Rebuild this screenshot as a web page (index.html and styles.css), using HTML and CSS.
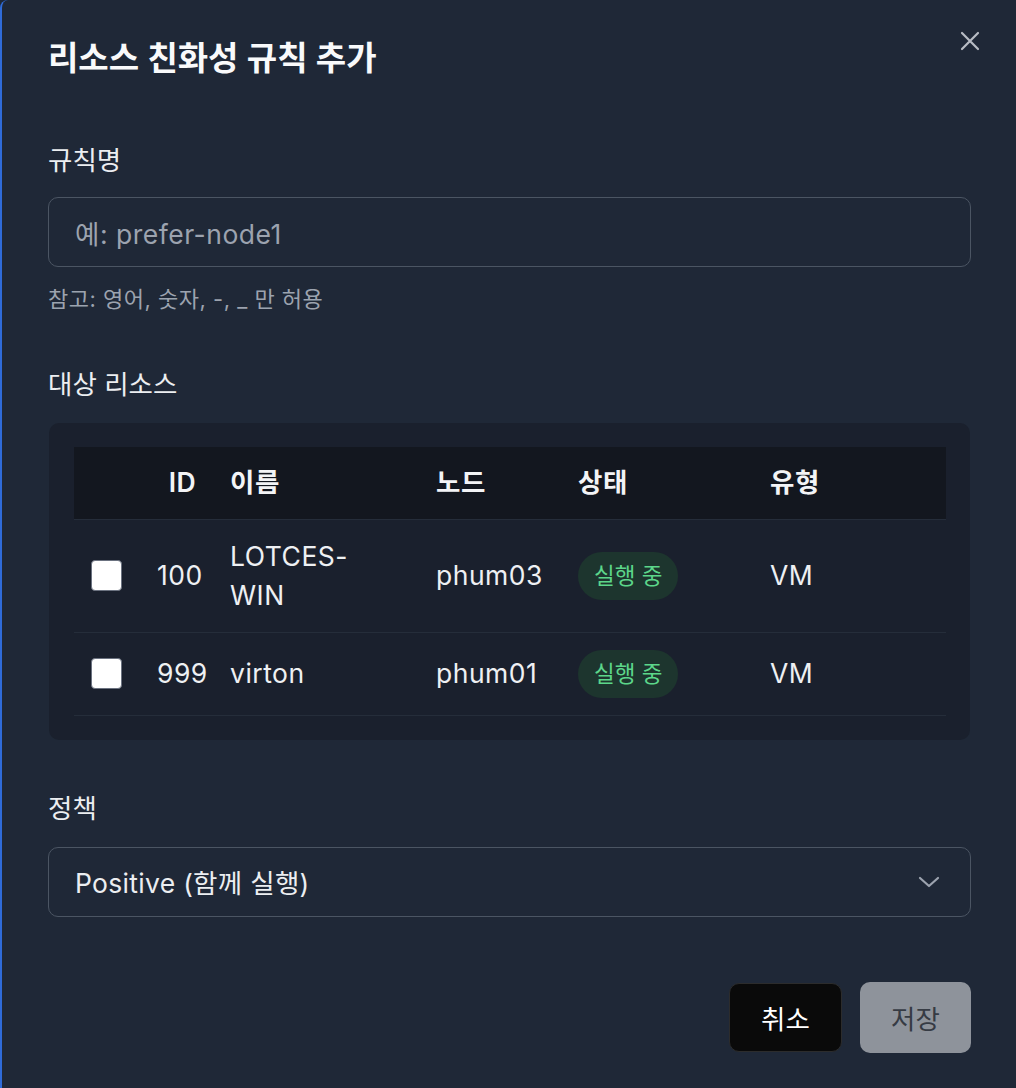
FILE: index.html
```html
<!DOCTYPE html>
<html lang="ko">
<head>
<meta charset="utf-8">
<title>리소스 친화성 규칙 추가</title>
<link rel="stylesheet" href="styles.css">
</head>
<body>
<div class="modal">
  <div class="header">
    <h1 class="title">리소스 친화성 규칙 추가</h1>
    <button class="close" aria-label="닫기">
      <svg width="20" height="20" viewBox="0 0 20 20"><path d="M2 2 L18 18 M18 2 L2 18" stroke="#b8bcc4" stroke-width="2.2" stroke-linecap="round" fill="none"/></svg>
    </button>
  </div>

  <label class="label l-name">규칙명</label>
  <div class="input"><span class="placeholder">예: prefer-node1</span></div>
  <p class="hint">참고: 영어, 숫자, -, _ 만 허용</p>

  <label class="label l-target">대상 리소스</label>
  <div class="table-wrap">
    <table class="res">
      <colgroup>
        <col style="width:75px"><col style="width:73px"><col style="width:206px"><col style="width:142px"><col style="width:192px"><col>
      </colgroup>
      <thead>
        <tr><th></th><th class="c-id">ID</th><th>이름</th><th>노드</th><th>상태</th><th>유형</th></tr>
      </thead>
      <tbody>
        <tr>
          <td class="c-chk"><input type="checkbox" class="chk"></td>
          <td>100</td>
          <td><span class="name">LOTCES-WIN</span></td>
          <td>phum03</td>
          <td><span class="badge">실행 중</span></td>
          <td>VM</td>
        </tr>
        <tr>
          <td class="c-chk"><input type="checkbox" class="chk"></td>
          <td>999</td>
          <td><span class="name">virton</span></td>
          <td>phum01</td>
          <td><span class="badge">실행 중</span></td>
          <td>VM</td>
        </tr>
      </tbody>
    </table>
  </div>

  <label class="label l-policy">정책</label>
  <div class="select">
    <span>Positive (함께 실행)</span>
    <svg class="chev" width="22" height="12" viewBox="0 0 22 12"><path d="M2 2 L11 10 L20 2" stroke="#9ca3af" stroke-width="2.2" fill="none" stroke-linecap="round" stroke-linejoin="round"/></svg>
  </div>

  <div class="actions">
    <button class="btn cancel">취소</button>
    <button class="btn save">저장</button>
  </div>
</div>
</body>
</html>
```

FILE: styles.css
```css
* { box-sizing: border-box; }
html, body { margin: 0; padding: 0; }
body {
  background: #1f2837;
  font-family: "Inter", "Noto Sans CJK KR", sans-serif;
  color: #e5e7eb;
  width: 1016px;
  height: 1088px;
  overflow: hidden;
}
.modal {
  height: 1088px;
  border-left: 2px solid #2f6bd8;
  border-top-left-radius: 8px;
  padding: 38px 45px 0 46px;
  background: #1f2837;
}
.header {
  position: relative;
}
.title {
  margin: 0;
  font-size: 33px;
  line-height: 40px;
  font-weight: 600;
  color: #f9fafb;
}
.close {
  position: absolute;
  top: -7px;
  right: -9px;
  background: none;
  border: 0;
  padding: 0;
  width: 20px;
  height: 20px;
  cursor: pointer;
}
.label {
  display: block;
  font-size: 26.5px;
  line-height: 36px;
  font-weight: 400;
  color: #eceef1;
  margin-bottom: 19px;
}
.l-name { margin-top: 64px; }
.l-target { margin-top: 52px; margin-bottom: 21px; }
.l-policy { margin-top: 50px; margin-bottom: 21px; }
.input, .select {
  height: 70px;
  border: 1.5px solid #4b5563;
  border-radius: 10px;
  padding: 0 26px;
  display: flex;
  align-items: center;
  font-size: 26.5px;
}
.placeholder { color: #9ca3af; letter-spacing: 0.5px; }
.hint {
  margin: 17px 0 0;
  font-size: 22px;
  line-height: 30px;
  letter-spacing: 0.5px;
  color: #9ca3af;
}
.table-wrap {
  background: #1a202d;
  border-radius: 10px;
  padding: 24px 24px 24px 25px;
  margin: 0 1px;
}
.res {
  width: 100%;
  border-collapse: collapse;
  table-layout: fixed;
  font-size: 26.5px;
  line-height: 39px;
  letter-spacing: 0.5px;
}
.res thead tr { background: #13171f; }
.res th {
  height: 72px;
  text-align: left;
  font-weight: 600;
  color: #f3f4f6;
  padding: 0 0 0 8px;
  border-bottom: 1px solid #252d3a;
}
.res th.c-id { text-align: center; padding-left: 8px; padding-right: 14px; }
.res td {
  padding: 17px 0 17px 8px;
  border-bottom: 1px solid #252d3a;
  vertical-align: middle;
  color: #eef0f3;
}
.res td.c-chk { padding-left: 17px; }
.name { display: inline-block; max-width: 150px; }
.chk {
  appearance: none;
  -webkit-appearance: none;
  width: 31px;
  height: 31px;
  margin: 0;
  display: block;
  background: #ffffff;
  border: 1.5px solid #6b7280;
  border-radius: 4px;
}
.badge {
  display: inline-block;
  height: 48px;
  line-height: 48px;
  padding: 0 16px;
  border-radius: 24px;
  background: #1d352e;
  color: #5cd68a;
  font-size: 22.5px;
  letter-spacing: 0;
}
.select {
  justify-content: space-between;
  color: #eceef1;
  padding-right: 30px;
  letter-spacing: 0.3px;
}
.chev { display: block; }
.actions {
  margin-top: 65px;
  display: flex;
  justify-content: flex-end;
  align-items: center;
  gap: 18px;
}
.btn {
  font-family: inherit;
  font-size: 26.5px;
  border-radius: 10px;
  cursor: pointer;
}
.cancel {
  width: 113px;
  height: 69px;
  background: #0a0a0a;
  border: 1px solid #2c2c2c;
  color: #ffffff;
}
.save {
  width: 111px;
  height: 71px;
  background: #8e939b;
  border: 0;
  color: #363b44;
}
```
